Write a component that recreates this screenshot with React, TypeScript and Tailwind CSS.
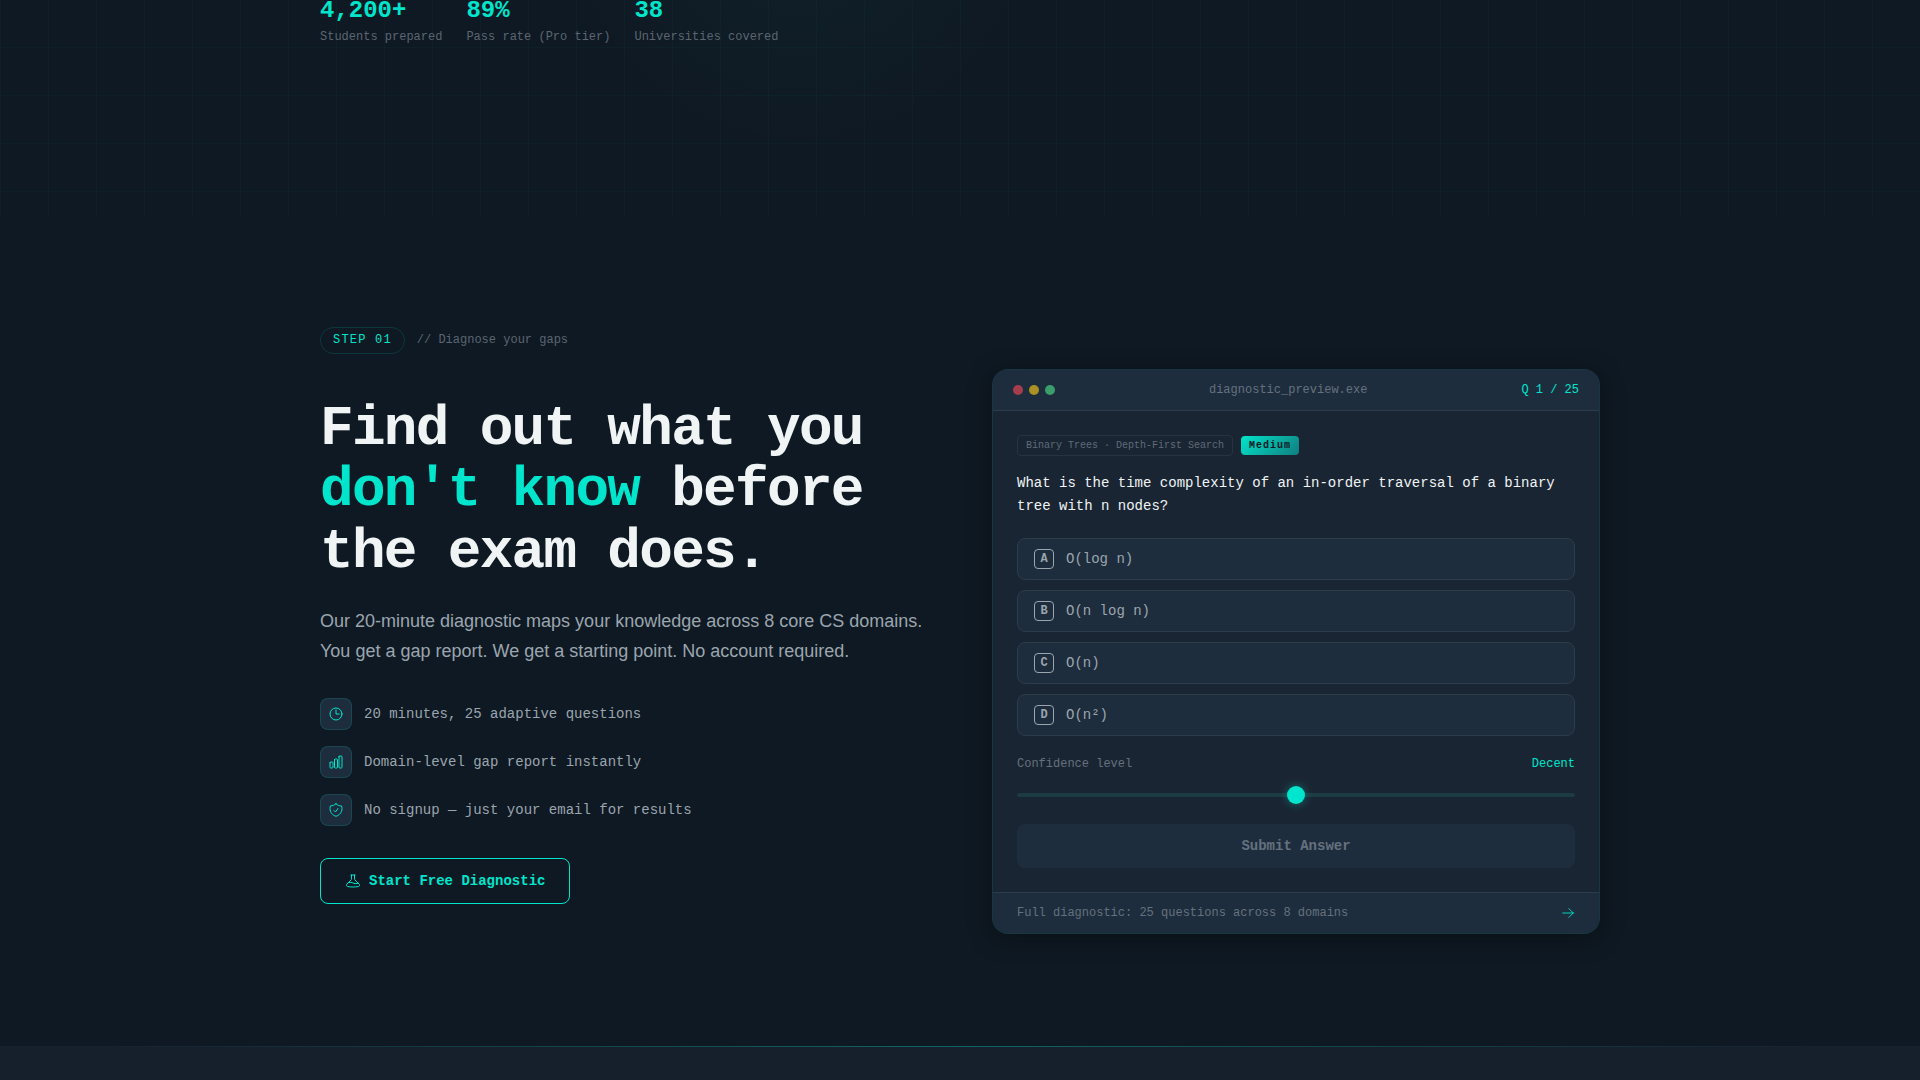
import { useState } from "react";
import {
  HiOutlineArrowRight,
  HiOutlineBeaker,
  HiOutlineChartBar,
  HiOutlineClock,
  HiOutlineShieldCheck,
} from "react-icons/hi2";

const stats = [
  { value: "4,200+", label: "Students prepared" },
  { value: "89%", label: "Pass rate (Pro tier)" },
  { value: "38", label: "Universities covered" },
];

const features = [
  { icon: HiOutlineClock, text: "20 minutes, 25 adaptive questions" },
  { icon: HiOutlineChartBar, text: "Domain-level gap report instantly" },
  { icon: HiOutlineShieldCheck, text: "No signup — just your email for results" },
];

const answers = [
  { key: "A", text: "O(log n)" },
  { key: "B", text: "O(n log n)" },
  { key: "C", text: "O(n)" },
  { key: "D", text: "O(n²)" },
];

const levels = ["Guessing", "Shaky", "Decent", "Strong", "Certain"];

function HeroStats() {
  return (
    <section className="bg-[linear-gradient(#00e5cc08_1px,transparent_1px),linear-gradient(90deg,#00e5cc08_1px,transparent_1px),radial-gradient(circle_at_800px_-90px,#00e5cc0a,transparent_240px)] bg-[size:48px_48px,48px_48px,auto] bg-[position:0_-1px,0_0,0_0] pb-[169px]">
      <dl className="mx-auto flex max-w-7xl gap-6">
        {stats.map((s) => (
          <div key={s.label} className="-mt-px flex flex-col-reverse">
            <dt className="text-xs leading-5 text-[#5b6671]">{s.label}</dt>
            <dd className="mb-1 text-2xl leading-6 font-bold text-[#00e5cc]">{s.value}</dd>
          </div>
        ))}
      </dl>
    </section>
  );
}

function Pitch() {
  return (
    <div>
      <h2 className="text-[56px] leading-[1.1] font-bold tracking-[-0.03em] text-[#f0f4f5]">
        Find out what you
        <br />
        <span className="text-[#00e5cc]">don't know</span> before
        <br />
        the exam does.
      </h2>
      <p className="mt-[22px] font-['Liberation_Sans',sans-serif] text-lg leading-[30px] text-[#9ba5ae]">
        Our 20-minute diagnostic maps your knowledge across 8 core CS domains. You get a gap report. We
        get a starting point. No account required.
      </p>
      <ul className="mt-8 flex flex-col gap-4">
        {features.map(({ icon: Icon, text }) => (
          <li key={text} className="flex items-center gap-3 text-sm text-[#9ba5ae]">
            <span className="flex size-8 items-center justify-center rounded-lg border border-[#00e5cc26] bg-[#1e2d3d]">
              <Icon className="size-4 text-[#00e5cc]" />
            </span>
            {text}
          </li>
        ))}
      </ul>
      <a
        href="#diagnostic"
        className="mt-8 inline-flex h-[46px] items-center gap-2 rounded-lg border border-[#00e5cc] px-6 text-sm font-bold text-[#00e5cc]"
      >
        <HiOutlineBeaker className="size-4" />
        Start Free Diagnostic
      </a>
    </div>
  );
}

function DiagnosticCard() {
  const [confidence, setConfidence] = useState(3);
  const [choice, setChoice] = useState("");

  return (
    <div className="overflow-hidden rounded-2xl border border-[#00e5cc1a] bg-[#1a2533] shadow-[0_4px_24px_#00000066]">
      <header className="flex h-[41px] items-center justify-between border-b border-[#2d3c49] bg-[#1e2d3d] px-5 text-xs">
        <div className="flex gap-1.5">
          <span className="size-2.5 rounded-full bg-[#a63d4b]" />
          <span className="size-2.5 rounded-full bg-[#ab9023]" />
          <span className="size-2.5 rounded-full bg-[#3b9d6b]" />
        </div>
        <span className="text-[#65717e]">diagnostic_preview.exe</span>
        <span className="text-[#00e5cc]">Q 1 / 25</span>
      </header>

      <form className="p-6" onSubmit={(e) => e.preventDefault()}>
        <div className="flex items-center gap-2 text-[10px] leading-[15px]">
          <span className="rounded-sm border border-[#27333f] px-2 py-0.5 text-[#5f6b78]">
            Binary Trees · Depth-First Search
          </span>
          <span className="rounded-sm bg-linear-135 from-[#00e5cc] to-[#0d7f7f] px-2 py-0.5 font-bold tracking-[0.1em] text-[#0f1923]">
            Medium
          </span>
        </div>

        <fieldset className="mt-4">
          <legend className="mb-5 text-sm leading-relaxed text-[#f0f4f5]">
            What is the time complexity of an in-order traversal of a binary tree with n nodes?
          </legend>
          <div className="flex flex-col gap-2.5">
            {answers.map((a) => (
              <button
                key={a.key}
                type="button"
                aria-pressed={choice === a.key}
                onClick={() => setChoice(a.key)}
                className="flex h-[42px] items-center gap-3 rounded-lg border border-[#2d3c49] bg-[#1e2d3d] px-4 text-left text-sm text-[#9ba5ae]"
              >
                <span className="flex size-5 items-center justify-center rounded-sm border border-[#9ba5ae] text-xs leading-none font-bold">
                  {a.key}
                </span>
                {a.text}
              </button>
            ))}
          </div>
        </fieldset>

        <div className="mt-5 flex items-center justify-between text-xs leading-4">
          <label htmlFor="confidence" className="text-[#65717e]">
            Confidence level
          </label>
          <output htmlFor="confidence" className="text-[#00e5cc]">
            {levels[confidence - 1]}
          </output>
        </div>
        <input
          id="confidence"
          type="range"
          min={1}
          max={5}
          value={confidence}
          onChange={(e) => setConfidence(Number(e.target.value))}
          className="mt-[21px] block h-1 w-full appearance-none rounded-full bg-[#1a3c42] [&::-webkit-slider-thumb]:size-[18px] [&::-webkit-slider-thumb]:appearance-none [&::-webkit-slider-thumb]:rounded-full [&::-webkit-slider-thumb]:bg-[#00e5cc] [&::-webkit-slider-thumb]:shadow-[0_0_10px_#00e5cc66]"
        />
        <button
          type="submit"
          disabled={choice === ""}
          className="mt-[27px] h-11 w-full rounded-lg bg-[#1e2d3d] text-sm font-bold text-[#65717e]"
        >
          Submit Answer
        </button>
      </form>

      <footer className="flex h-[41px] items-center justify-between border-t border-[#2d3c49] bg-[#1e2d3d] px-6 text-xs text-[#65717e]">
        Full diagnostic: 25 questions across 8 domains
        <a href="#diagnostic" aria-label="Open full diagnostic" className="text-[#00e5cc]">
          <HiOutlineArrowRight className="size-3.5" />
        </a>
      </footer>
    </div>
  );
}

export default function App() {
  return (
    <div className="flex min-h-screen flex-col overflow-hidden bg-[#0f1923] font-['Liberation_Mono',monospace]">
      <HeroStats />
      <section id="diagnostic" className="pt-[111px] pb-28">
        <div className="mx-auto max-w-7xl">
          <div className="mb-[15px] flex items-center gap-3 text-xs leading-[17px]">
            <span className="rounded-full border border-[#00e5cc26] px-3 py-1 tracking-[0.1em] text-[#00e5cc]">
              STEP 01
            </span>
            <span className="text-[#5b6671]">// Diagnose your gaps</span>
          </div>
          <div className="grid grid-cols-2 items-center gap-16">
            <Pitch />
            <DiagnosticCard />
          </div>
        </div>
      </section>
      <div className="flex-1 bg-[#16202c]">
        <div className="h-px bg-linear-to-r from-transparent from-5% via-[#00e5cc59] to-transparent to-95%" />
      </div>
    </div>
  );
}
